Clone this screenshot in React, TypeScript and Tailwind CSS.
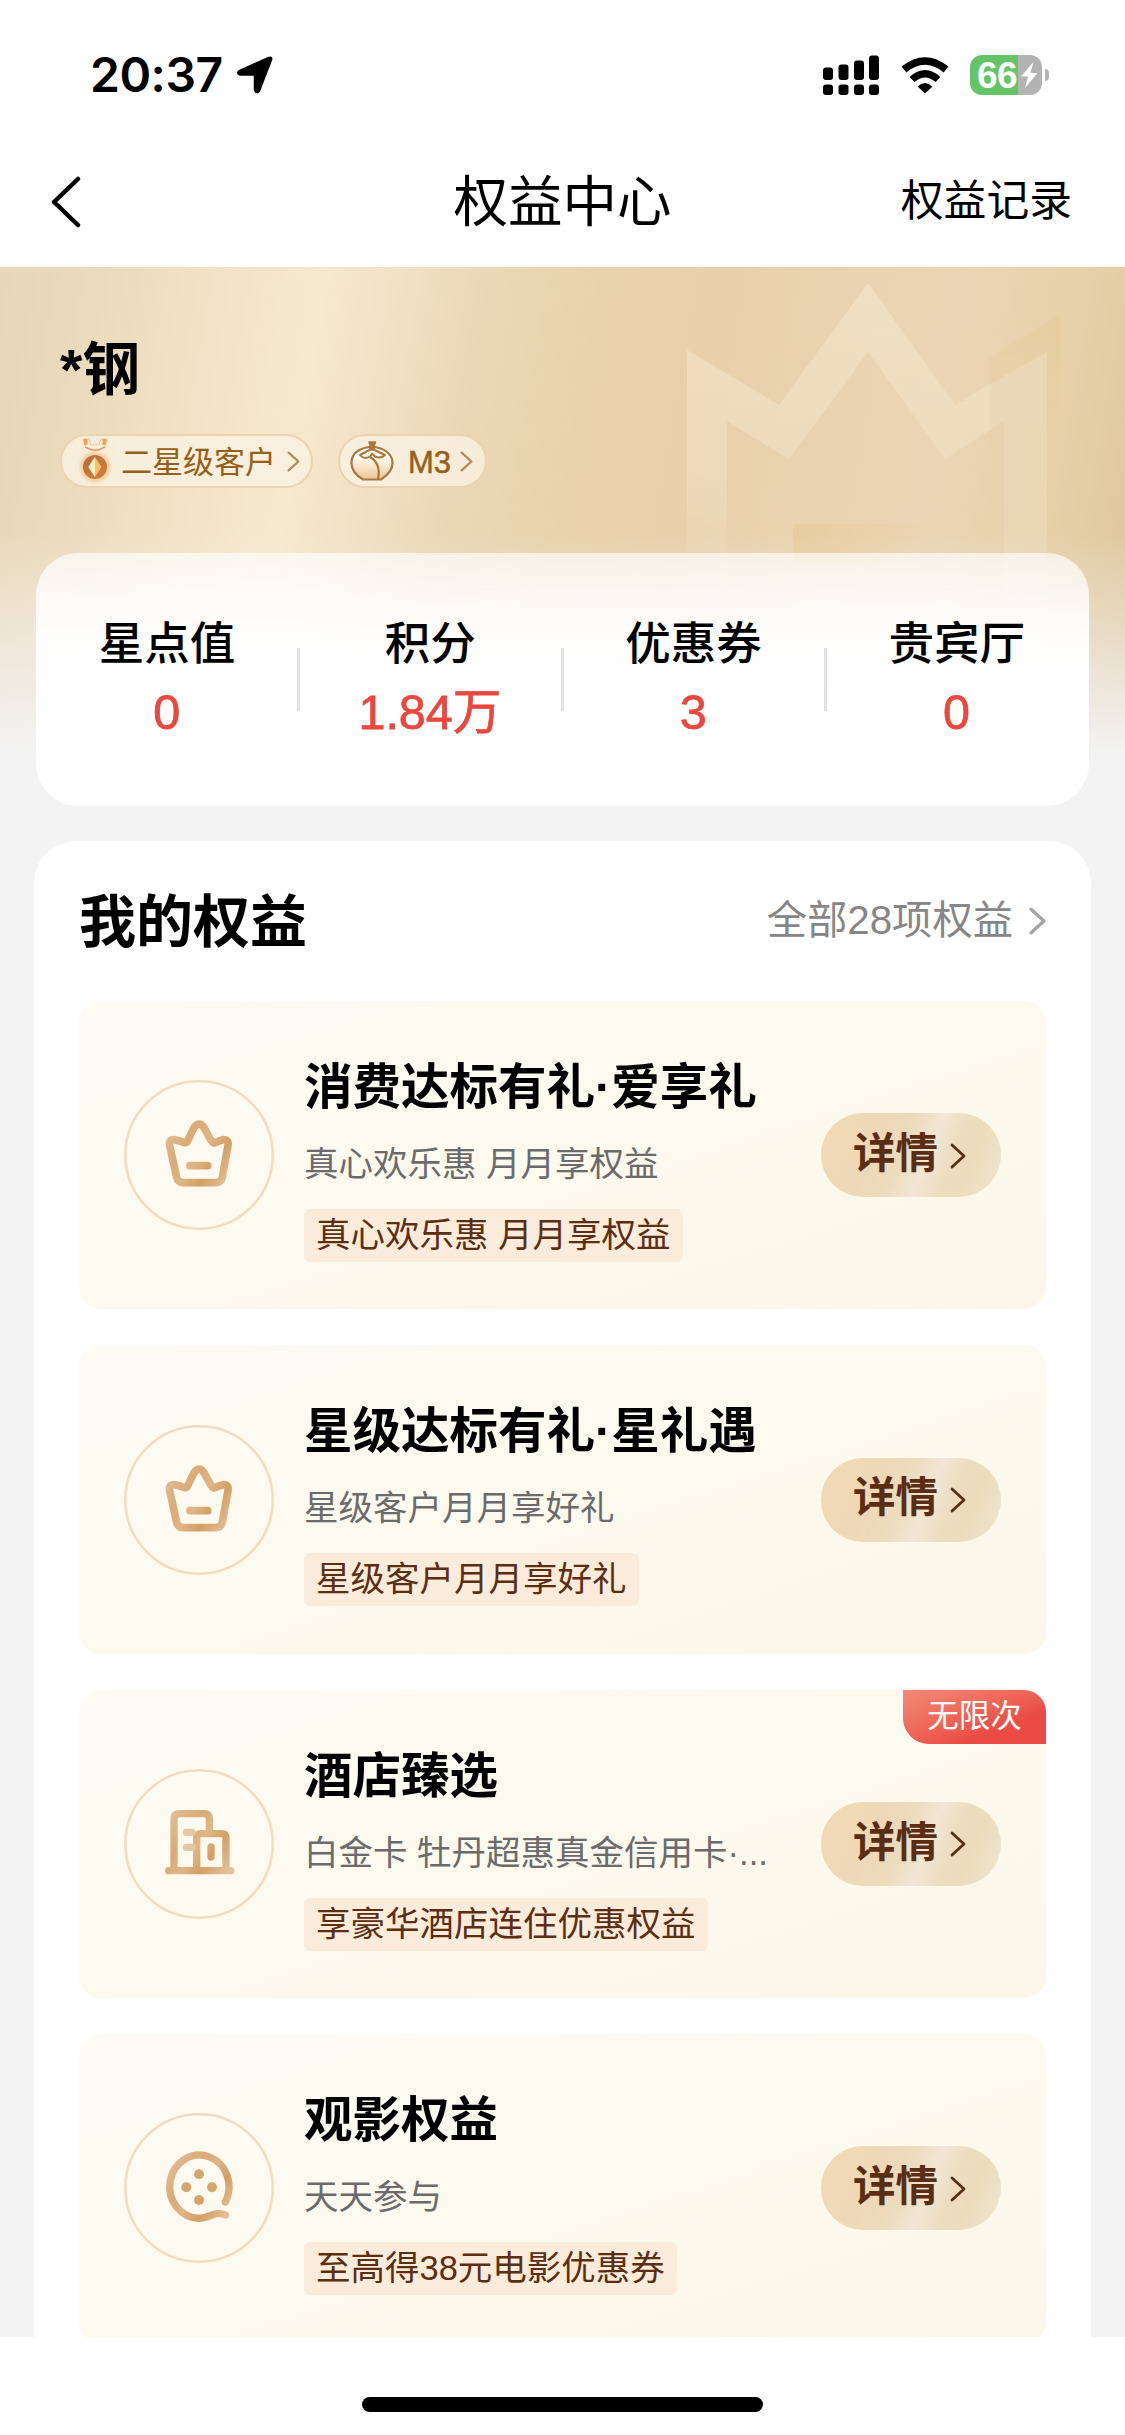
import type { ReactNode } from 'react';

const STATS = [
  { label: '星点值', value: '0' },
  { label: '积分', value: '1.84万' },
  { label: '优惠券', value: '3' },
  { label: '贵宾厅', value: '0' },
];

const BENEFITS = [
  { icon: 'crown', title: '消费达标有礼·爱享礼', desc: '真心欢乐惠 月月享权益', tag: '真心欢乐惠 月月享权益', badge: '' },
  { icon: 'crown', title: '星级达标有礼·星礼遇', desc: '星级客户月月享好礼', tag: '星级客户月月享好礼', badge: '' },
  { icon: 'hotel', title: '酒店臻选', desc: '白金卡 牡丹超惠真金信用卡·...', tag: '享豪华酒店连住优惠权益', badge: '无限次' },
  { icon: 'film', title: '观影权益', desc: '天天参与', tag: '至高得38元电影优惠券', badge: '' },
];

function Chevron({ className, strokeWidth = 2 }: { className: string; strokeWidth?: number }) {
  return (
    <svg className={className} viewBox="0 0 16 26" fill="none" stroke="currentColor" strokeWidth={strokeWidth} strokeLinecap="round" strokeLinejoin="round">
      <path d="M2 2L14 13L2 24" />
    </svg>
  );
}

function StatusBar() {
  return (
    <div className="flex h-[150px] items-center justify-between pl-[90px] pr-[76px]">
      <div className="flex items-center gap-[13px]">
        <span className="font-['Inter'] text-[48px] font-semibold leading-none tracking-[-0.500px]">20:37</span>
        <svg className="h-[38px] w-[38px]" viewBox="0 0 38 38">
          <path d="M34.500 3.500L22.500 34.500Q21 37 19.500 34V19.500Q19.500 18 18 18H4Q1.500 17 4 15.300L32.500 2.700Q35.500 1.500 34.500 3.500Z" fill="#000" stroke="#000" strokeWidth="3.500" strokeLinejoin="round" />
        </svg>
      </div>
      <div className="flex items-center">
        <svg className="h-[40px] w-[57px]" viewBox="0 0 57 40">
          <rect x="0" y="12.500" width="10" height="12.500" rx="3" />
          <rect x="15.500" y="9.500" width="10" height="15.500" rx="3" />
          <rect x="31" y="5.500" width="10" height="19.500" rx="3" />
          <rect x="46" y="0.500" width="10" height="24.500" rx="3" />
          <rect x="0" y="29.500" width="10" height="10.500" rx="3" />
          <rect x="15.500" y="29.500" width="10" height="10.500" rx="3" />
          <rect x="31" y="29.500" width="10" height="10.500" rx="3" />
          <rect x="46" y="29.500" width="10" height="10.500" rx="3" />
        </svg>
        <svg className="ml-[20px] h-[37px] w-[50px]" viewBox="0 0 50 37">
          <path d="M4 12.500Q25 -4.500 46 12.500" fill="none" stroke="#000" strokeWidth="7.500" />
          <path d="M12 22.500Q25 11 38 22.500" fill="none" stroke="#000" strokeWidth="7" />
          <path d="M17.500 29.500Q25 22.500 32.500 29.500L26 35.500Q25 36.500 24 35.500Z" />
        </svg>
        <div className="ml-[20px] flex items-center gap-[3px]">
          <div className="flex h-[40px] w-[72px] items-center rounded-[12px] bg-linear-to-r from-[#65c466] from-67% to-[#b3b3b3] to-67% pl-[7px] text-white">
            <span className="text-[37px] font-bold leading-none tracking-[-0.500px]">66</span>
            <svg className="ml-[3px] h-[28px] w-[18px]" viewBox="0 0 18 28" fill="#fff">
              <path d="M13.500 1L1 15.500H8L5 27L17.500 12H10.500Z" />
            </svg>
          </div>
          <div className="h-[12px] w-[4px] rounded-r-full bg-[#b3b3b3]" />
        </div>
      </div>
    </div>
  );
}

function NavBar() {
  return (
    <div className="grid h-[117px] grid-cols-3 items-center pb-[14px]">
      <svg className="ml-[50px] h-[52px] w-[32px]" viewBox="0 0 32 52" fill="none" stroke="#000" strokeWidth="4.500" strokeLinecap="round" strokeLinejoin="round">
        <path d="M28 3L4 26L28 49" />
      </svg>
      <h1 className="pt-[3px] text-center text-[54.500px] leading-none">权益中心</h1>
      <span className="pr-[53px] text-right text-[42.800px] leading-none">权益记录</span>
    </div>
  );
}

// Translucent crown watermark behind the member header
function CrownWatermark() {
  return (
    <svg className="absolute left-[680px] top-0 h-[360px] w-[400px]" viewBox="680 267 400 360">
      <defs>
        <linearGradient id="wm" x1="0" y1="0" x2="0" y2="1">
          <stop offset="0" stopColor="#f2e3c6" stopOpacity="0.750" />
          <stop offset="0.600" stopColor="#f2e3c6" stopOpacity="0.500" />
          <stop offset="1" stopColor="#f2e3c6" stopOpacity="0" />
        </linearGradient>
        <linearGradient id="wmDark" x1="0" y1="0" x2="0" y2="1">
          <stop offset="0" stopColor="#e6cb9a" stopOpacity="0.600" />
          <stop offset="1" stopColor="#e6cb9a" stopOpacity="0" />
        </linearGradient>
        <linearGradient id="wmBar" x1="0" y1="0" x2="1" y2="0">
          <stop offset="0" stopColor="#e6cc9c" stopOpacity="0.850" />
          <stop offset="1" stopColor="#e6cc9c" stopOpacity="0" />
        </linearGradient>
      </defs>
      <path d="M990 357L1060 314V420L1047 440V352L990 384Z" fill="url(#wmDark)" />
      <path d="M687 350L779 405L868 283L955 405L990 384V430L945 459L868 352L789 459L727 421V600H687Z" fill="url(#wm)" />
      <path d="M990 384L1047 352V600H1004V421L990 430Z" fill="#f2e3c6" fillOpacity="0.350" />
      <path d="M793 524H935V565H793Z" fill="url(#wmBar)" />
    </svg>
  );
}

function MedalIcon() {
  return (
    <svg className="h-[50px] w-[34px]" viewBox="0 0 34 50">
      <defs>
        <radialGradient id="glow">
          <stop offset="0.650" stopColor="#f3a75c" stopOpacity="0.700" />
          <stop offset="1" stopColor="#f3a75c" stopOpacity="0" />
        </radialGradient>
        <linearGradient id="medal" x1="0" y1="0" x2="1" y2="1">
          <stop offset="0" stopColor="#b06a3a" />
          <stop offset="1" stopColor="#d8823c" />
        </linearGradient>
      </defs>
      <path d="M5 3H11L13 9H21L23 3H29L27 10L21 14H13L7 10Z" fill="#fff1dd" stroke="#f0b784" strokeWidth="0.800" />
      <path d="M5.500 3H9.500V9H6.500ZM24.500 3H28.500L27.500 9H24.500Z" fill="#eda14f" />
      <path d="M7 11L14 14H20L27 11" fill="none" stroke="#e69c6a" strokeWidth="1.500" />
      <circle cx="17" cy="31" r="17" fill="url(#glow)" />
      <circle cx="17" cy="31" r="12.800" fill="url(#medal)" stroke="#fbd5a2" strokeWidth="1.500" />
      <path d="M17 21L23.500 31L17 41L10.500 31Z" fill="#f5c164" />
      <path d="M17 21V41L10.500 31Z" fill="#fff0c8" />
    </svg>
  );
}

function PouchIcon() {
  return (
    <svg className="h-[42px] w-[44px]" viewBox="0 0 44 42" fill="none" stroke="#a9783e" strokeWidth="2.200" strokeLinejoin="round">
      <defs>
        <linearGradient id="pouch" x1="0" y1="0" x2="0" y2="1">
          <stop offset="0.300" stopColor="#fffaf0" />
          <stop offset="1" stopColor="#ecc795" />
        </linearGradient>
      </defs>
      <path d="M19 7C7 9 1.500 15 1.500 23C1.500 30 7 36 13 39.500H31C38 35 42.500 30 42.500 23C42.500 15 36 9 25 7Z" fill="url(#pouch)" />
      <path d="M19 2H25.500L24 6.500L24.500 10H19.500L20.500 6.500Z" fill="#a9783e" strokeWidth="1.500" />
      <path d="M19.500 10L10 15Q14 20 20 16.500L22 13.500L25 16.500Q31 19 35 15L24.500 10" strokeWidth="2" />
      <path d="M20 17C27 21 30 29 28 39" />
    </svg>
  );
}

function BenefitIcon({ name }: { name: string }) {
  const stroke = 'url(#gold)';
  return (
    <svg className="h-[150px] w-[150px] shrink-0" viewBox="0 0 450 450" fill="none" strokeLinecap="round" strokeLinejoin="round">
      <defs>
        <linearGradient id="gold" gradientUnits="userSpaceOnUse" x1="130" y1="150" x2="330" y2="290" spreadMethod="reflect">
          <stop offset="0" stopColor="#e3bd92" />
          <stop offset="0.300" stopColor="#d9ab76" />
          <stop offset="0.500" stopColor="#e0b685" />
          <stop offset="0.700" stopColor="#d2a064" />
          <stop offset="1" stopColor="#e6c39c" />
        </linearGradient>
      </defs>
      <circle cx="225" cy="225" r="221" stroke="#f0dcbf" strokeWidth="7.500" />
      {name === 'crown' && (
        <g stroke={stroke} strokeWidth="23">
          <path d="M152 179Q133 178 137 197L158 292Q162 308 178 308H275Q291 308 295 292L312 197Q315 178 297 179Q284 182 270 189Q264 186 261 181L240 143Q225 122 210 143L190 184Q188 189 182 188Q168 182 152 179Z" />
          <path d="M198 257H251" />
        </g>
      )}
      {name === 'hotel' && (
        <g stroke={stroke} strokeWidth="22">
          <path d="M150 302V150Q150 134 166 134H240Q256 134 256 150V190" />
          <path d="M218 302V208Q218 194 232 194H292Q306 194 306 208V302" />
          <path d="M134 305H320" />
          <path d="M187 190H204M187 235H204" stroke="#e6c8a0" />
          <path d="M261 234V264" />
        </g>
      )}
      {name === 'film' && (
        <g>
          <path d="M304 267A89 95 0 1 0 225 316C256 316 274 292 305 306" stroke={stroke} strokeWidth="22" />
          <g fill="#d6a56c">
            <circle cx="225" cy="184" r="15" />
            <circle cx="187" cy="223" r="15" />
            <circle cx="264" cy="223" r="15" />
            <circle cx="225" cy="261" r="15" />
          </g>
        </g>
      )}
    </svg>
  );
}

function Pill({ className, children }: { className: string; children: ReactNode }) {
  return (
    <div className={`flex h-[54px] items-center rounded-full border-2 border-[#ebd4ad] bg-[#f9f1e2]/80 text-[31px] leading-none text-[#956018] ${className}`}>
      {children}
    </div>
  );
}

export default function App() {
  return (
    <div className="flex h-[2435px] w-[1125px] flex-col overflow-hidden bg-white font-['Liberation_Sans','Noto_Sans_CJK_SC',sans-serif] text-black">
      <header>
        <StatusBar />
        <NavBar />
      </header>

      <main className="relative h-[2070px] overflow-hidden bg-[#f3f3f3]">
        {/* Gold backdrop */}
        <div className="absolute inset-x-0 top-0 h-[485px] bg-[linear-gradient(100deg,#e7d7b9_0%,#ecdcbe_10%,#f3e4c9_20%,#f6e8ce_27%,#f1e1c5_33%,#ebd8b6_40%,#e8d2ac_50%,#e8d0ab_60%,#ebd5b4_80%,#e6d0a9_90%,#dcc59b_100%)]">
          <CrownWatermark />
          <div className="absolute inset-x-0 bottom-0 h-[220px] bg-linear-to-b from-[#f3f3f3]/0 to-[#f3f3f3]" />
        </div>

        <div className="relative">
          <section className="h-[286px] px-[60px] pt-[74px]">
            <h2 className="text-[57.500px] font-bold leading-[58px]">*钢</h2>
            <div className="mt-[35px] flex gap-[25px]">
              <Pill className="w-[253px] pl-[16px]">
                <MedalIcon />
                <span className="ml-[9px] pt-[2px]">二星级客户</span>
                <Chevron className="ml-[11px] h-[21px] w-[13px] text-[#b28a55]" strokeWidth={2.8} />
              </Pill>
              <Pill className="w-[149px] pl-[10px]">
                <PouchIcon />
                <span className="ml-[14px] pt-[2px] [-webkit-text-stroke:0.5px_#956018]">M3</span>
                <Chevron className="ml-[9px] h-[21px] w-[13px] text-[#b28a55]" strokeWidth={2.8} />
              </Pill>
            </div>
          </section>

          <section className="mx-[36px] flex h-[253px] rounded-[42px] bg-linear-to-b from-white/65 via-white/95 via-35% to-white to-55% pt-[67px]">
            {STATS.map((s, i) => (
              <div key={s.label} className="relative flex flex-1 flex-col items-center">
                <span className="pr-px text-[45.500px] font-medium leading-[50px]">{s.label}</span>
                <span className="mt-[17px] pr-[2px] text-[48.500px] leading-[50px] text-[#e9483f] [-webkit-text-stroke:0.8px_#e9483f]">{s.value}</span>
                {i > 0 && <div className="absolute left-[-2px] top-[28px] h-[63px] w-[3px] bg-[#e2e2e2]" />}
              </div>
            ))}
          </section>

          <section className="mx-[34px] mt-[35px] rounded-t-[42px] bg-white px-[45px] pb-10">
            <div className="flex h-[160px] items-center justify-between">
              <h2 className="pt-[3px] text-[57px] font-bold leading-none">我的权益</h2>
              <div className="flex items-center gap-[16px] text-[40.300px] leading-none text-[#868686]">
                <span>全部28项权益</span>
                <Chevron className="h-[28px] w-[17px] text-[#a5a5a5]" strokeWidth={3.2} />
              </div>
            </div>

            <div className="flex flex-col gap-[36px]">
              {BENEFITS.map((b) => (
                <article key={b.title} className="relative flex h-[308.400px] rounded-[22px] bg-linear-to-br from-[#fdfbf4] via-[#fcf9ee] to-[#fbf6e8] pl-[45px] pr-[45px]">
                  <div className="flex items-center">
                    <BenefitIcon name={b.icon} />
                  </div>
                  <div className="ml-[30px] w-[500px] shrink-0 pt-[62px]">
                    <h3 className="whitespace-nowrap text-[48.500px] font-bold leading-[48px]">{b.title}</h3>
                    <p className="mt-[31px] whitespace-nowrap text-[34.500px] leading-[44px] text-[#6b6b6b]">{b.desc}</p>
                    <div className="mt-[23px] flex">
                      <span className="h-[53px] whitespace-nowrap rounded-[6px] bg-[#faebdb] px-[12px] text-[34.500px] leading-[52px] text-[#5c2e12]">{b.tag}</span>
                    </div>
                  </div>
                  <div className="ml-auto flex items-center">
                    <button className="flex h-[84px] w-[180px] items-center rounded-full bg-[linear-gradient(112deg,#f1d9b3_0%,#eed8b7_30%,#ecdbbd_45%,#f2e6d4_58%,#ecddbf_70%,#ebdcbc_80%,#f0e5cf_100%)] pb-[2px] pl-[32px] text-[42.500px] font-bold leading-none text-[#5a2d14]">
                      <span>详情</span>
                      <Chevron className="ml-[12px] mt-[3px] h-[26px] w-[16px]" strokeWidth={2.8} />
                    </button>
                  </div>
                  {b.badge && (
                    <div className="absolute right-0 top-0 h-[54px] w-[143px] rounded-bl-[26px] rounded-tr-[22px] bg-linear-to-br from-[#f28b76] to-[#ea4b45] to-70% text-center text-[31.500px] leading-[53px] text-white">
                      {b.badge}
                    </div>
                  )}
                </article>
              ))}
            </div>
          </section>
        </div>
      </main>

      <footer className="flex flex-1 justify-center bg-white pt-[60px]">
        <div className="h-[15px] w-[401px] rounded-full bg-black" />
      </footer>
    </div>
  );
}
